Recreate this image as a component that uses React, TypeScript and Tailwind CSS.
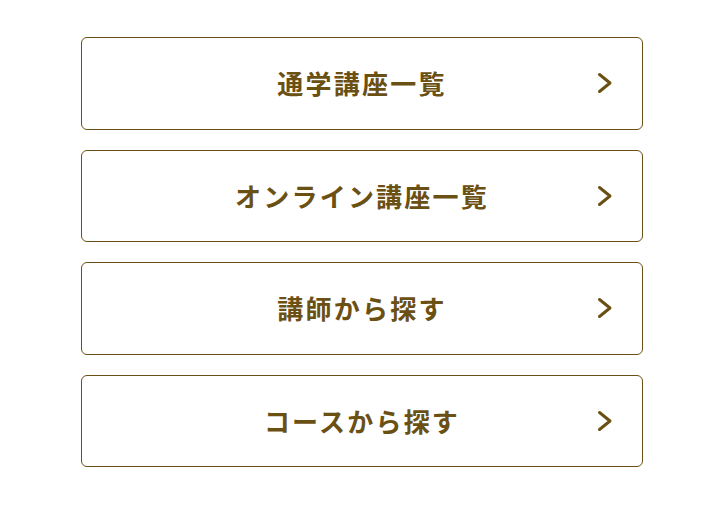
import React from 'react';

const ITEMS = ['通学講座一覧', 'オンライン講座一覧', '講師から探す', 'コースから探す'];

const Chevron: React.FC = () => (
  <svg width="18" height="24" viewBox="0 0 18 24" fill="none" aria-hidden="true">
    <path d="M3.5 3.5 L14 12 L3.5 20.5" stroke="currentColor" strokeWidth="3" strokeLinecap="round" strokeLinejoin="round" />
  </svg>
);

const App: React.FC = () => {
  return (
    <div className="w-[726px] h-[510px] bg-white pt-[37px] pl-[81px]" style={{ fontFamily: '"Noto Sans CJK JP", "Noto Sans", sans-serif' }}>
      <div className="w-[562px] flex flex-col gap-[20px]">
        {ITEMS.map((label) => (
          <a
            key={label}
            href="#"
            className="relative h-[92.5px] flex items-center justify-center border-[1.25px] border-[#6a5015] rounded-[6px] text-[#6b5014]"
          >
            <span className="text-[26px] font-bold tracking-[0.085em] leading-none">{label}</span>
            <span className="absolute right-[28px] top-1/2 -translate-y-1/2 flex">
              <Chevron />
            </span>
          </a>
        ))}
      </div>
    </div>
  );
};

export default App;
